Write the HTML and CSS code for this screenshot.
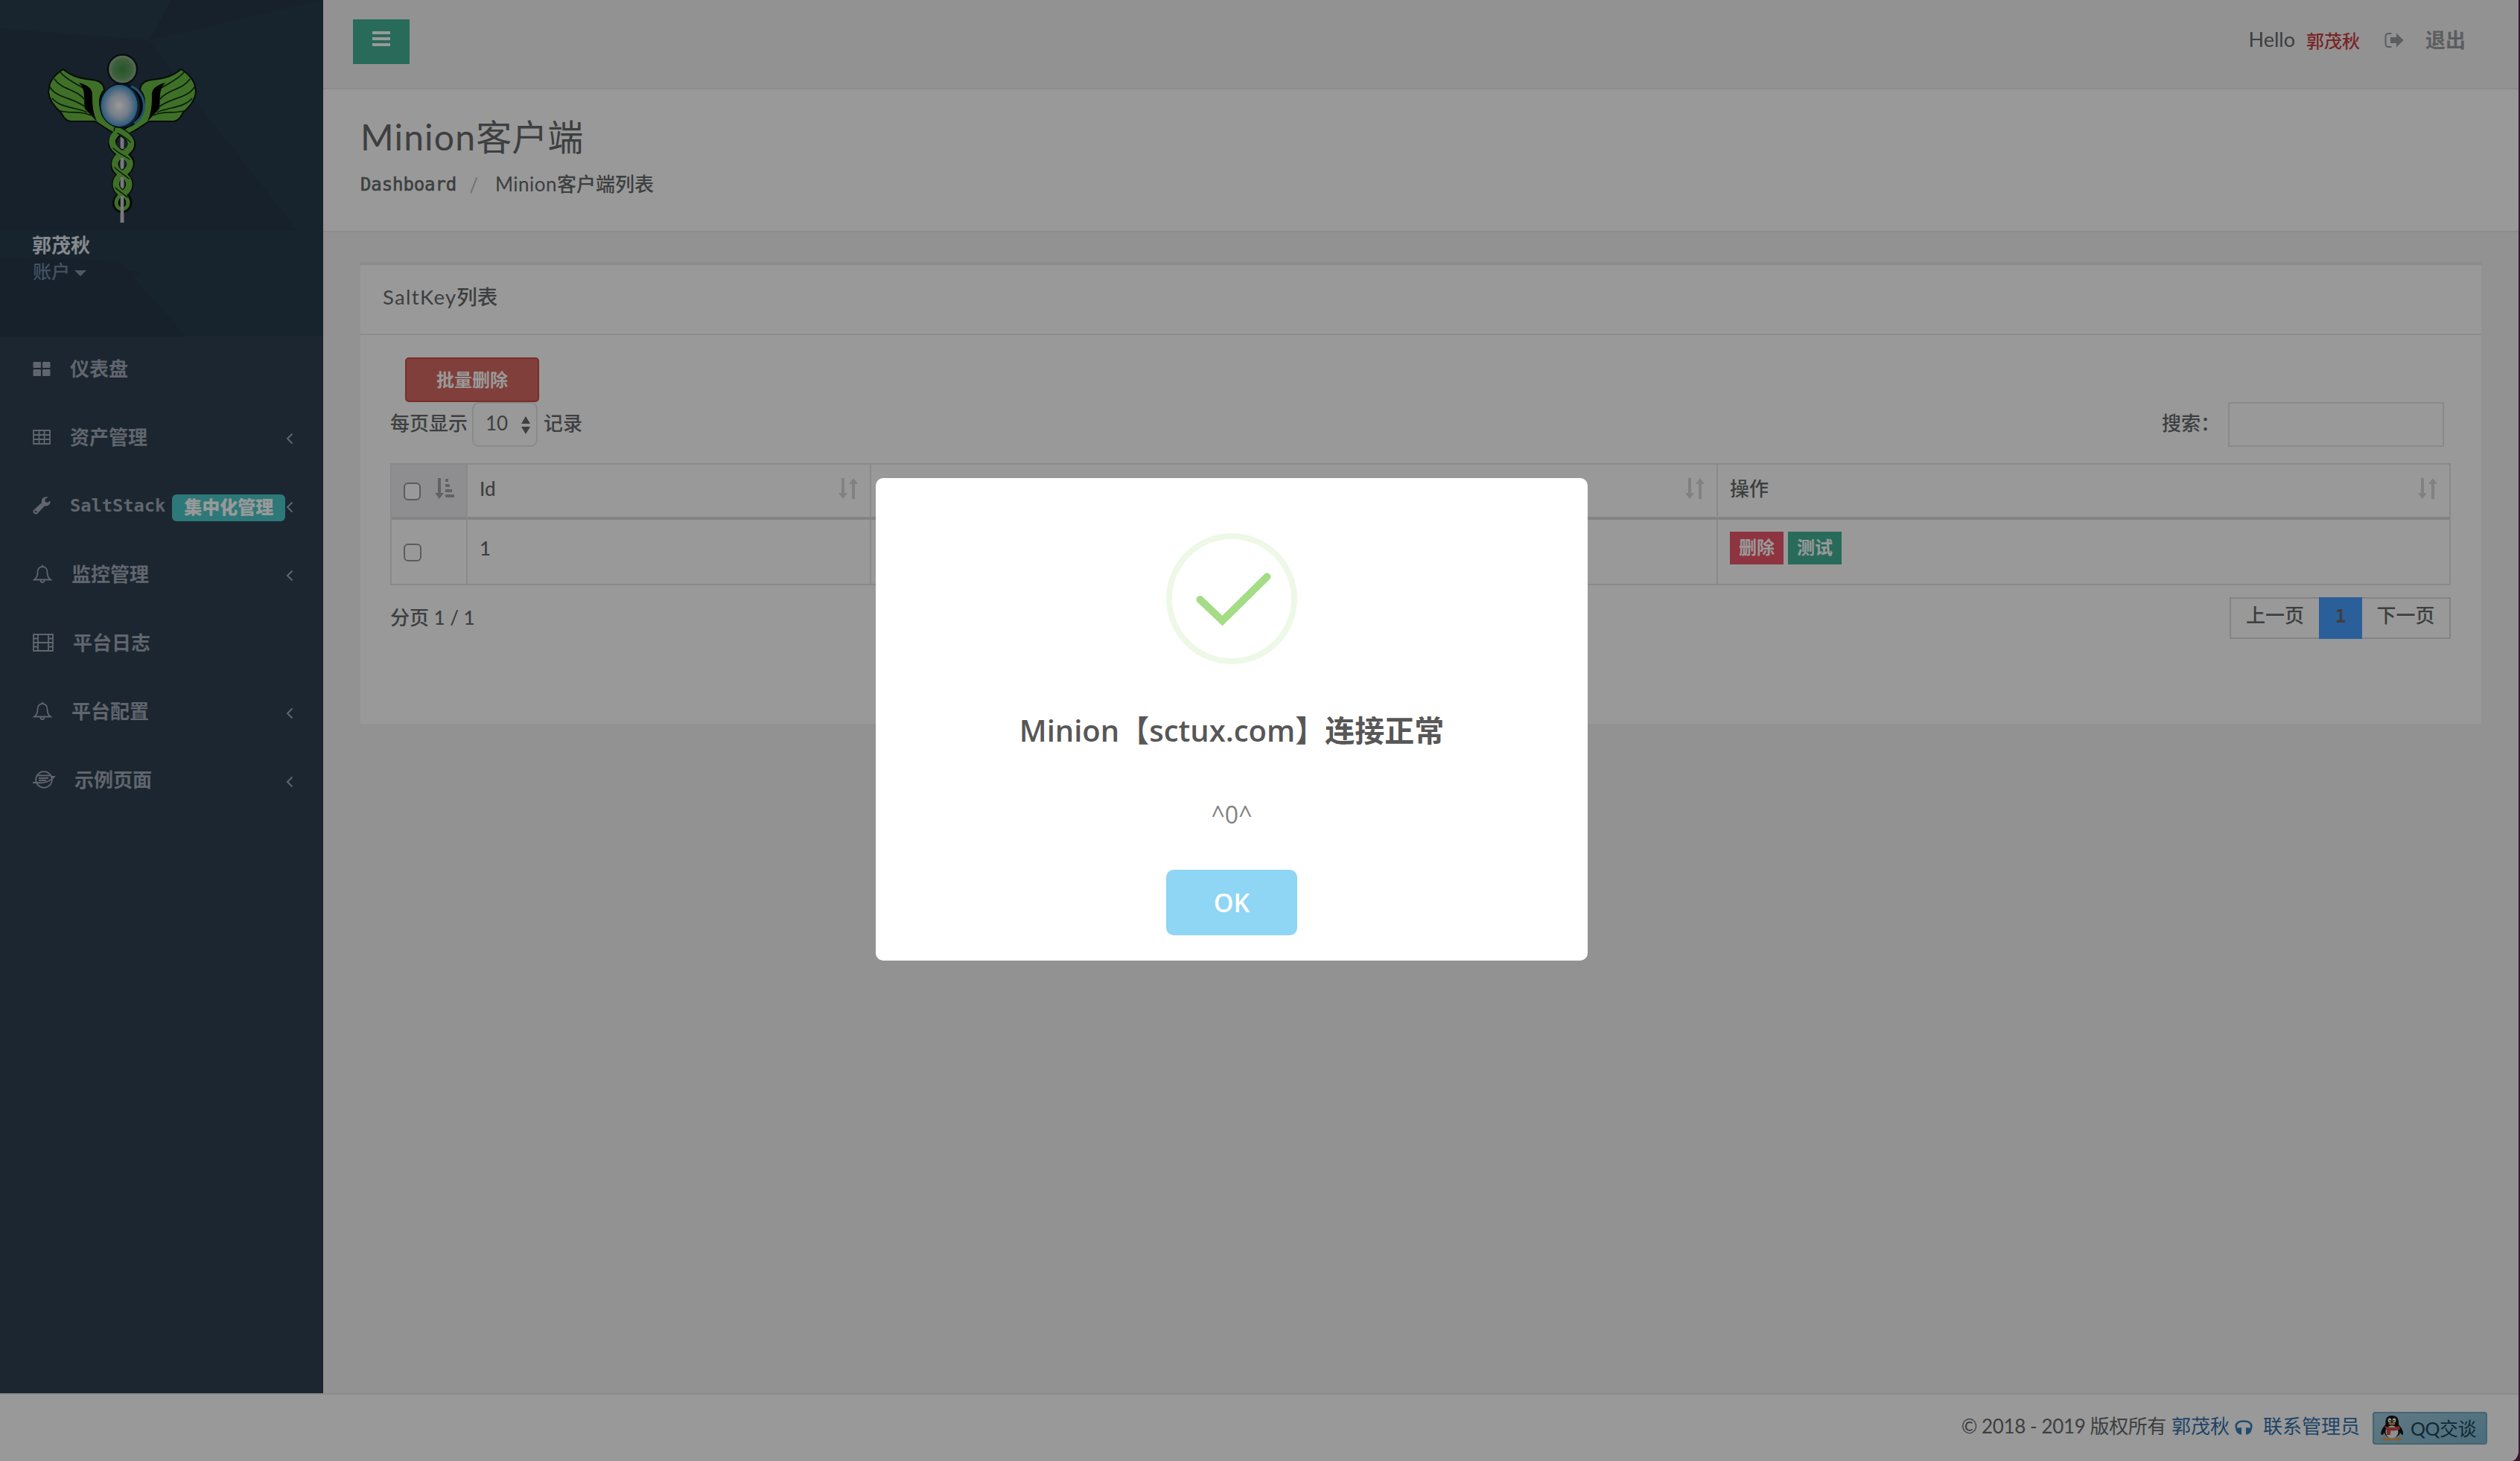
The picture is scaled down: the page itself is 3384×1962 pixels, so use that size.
FILE: index.html
```html
<!DOCTYPE html>
<html lang="zh-CN">
<head>
<meta charset="utf-8">
<title>Minion客户端</title>
<link rel="stylesheet" href="styles.css">
</head>
<body>
<svg class="defs" width="0" height="0" aria-hidden="true">
  <defs>
    <symbol id="bell" viewBox="0 0 26 26"><path d="M13 3c-4.500 0-6.500 3.500-6.500 7.500 0 5-1.500 8-4.500 10h22c-3-2-4.500-5-4.500-10C19.500 6.500 17.500 3 13 3zM13 3V.8M10.500 21.500a2.500 2.500 0 0 0 5 0" fill="none" stroke="currentColor" stroke-width="1.800"/></symbol>
    <symbol id="chev" viewBox="0 0 10 16"><path d="M8.500 1.500 2 8l6.500 6.500" fill="none" stroke="currentColor" stroke-width="2"/></symbol>
    <symbol id="sort" viewBox="0 0 26 28"><path d="M4 0h4v20h4l-6 8-6-8h4zM18 28h4V8h4l-6-8-6 8h4z" fill="currentColor"/></symbol>
  </defs>
</svg>
<div class="app">
  <div class="main">
    <aside class="side">
      <div class="profile">
        <svg class="facets" viewBox="0 0 434 452" preserveAspectRatio="none"><path d="M0 38 200 54 230 0H0z" fill="#2b4152"/><path d="M200 54 434 0v310H400L265 140z" fill="#294253" opacity=".6"/><path d="M0 310h434v142H250L160 350 0 345z" fill="#294356" opacity=".8"/><path d="M0 345 190 365 60 452H0z" fill="#263848"/></svg>
        <svg class="logo" viewBox="0 0 240 250">
          <defs>
            <radialGradient id="head"><stop offset="0" stop-color="#3f8d45"/><stop offset=".7" stop-color="#69a169"/><stop offset="1" stop-color="#a8b79c"/></radialGradient>
            <radialGradient id="orb"><stop offset="0" stop-color="#ffffff"/><stop offset=".55" stop-color="#c2d2e6"/><stop offset="1" stop-color="#4598d0"/></radialGradient>
            <g id="wing"><path d="M45 33C60 46 77 46 89 48c8 2 11 8 11 13-8 8-10 28 6 43l19 12-5 6C104 115 95 107 88 103H55C48 102 45 97 42 91c-7-6-16-16-17-28l2-11c4-8 11-15 18-19z" fill="#69bb43" stroke="#0a140c" stroke-width="2"/><path d="M66 51c14 4 19 9 18 19 0 15 2 24 6 33L74 86c-2-13 2-25-8-35z" fill="#000"/><path d="M41 37c8 10 20 14 30 21M33 46c10 15 29 13 41 28M27 57c9 15 32 14 48 27M30 72c12 14 35 12 47 19M41 89c14 4 28-1 41 6" fill="none" stroke="#123012" stroke-width="1.700"/></g>
          </defs>
          <path d="M124 122v117" stroke="#c9c9d0" stroke-width="4.500"/>
          <use href="#wing"/><use href="#wing" transform="translate(248 0) scale(-1 1)"/>
          <g fill="none" stroke-linecap="round">
            <g stroke="#08130a" stroke-width="11"><path d="M118 115c28 14 20 27 6 32-14 8-12 22 0 27 14 8 12 20 0 27-10 8-10 18 0 20"/><path d="M118 119c-12 12-8 22 6 27 16 8 14 20 0 28-12 8-10 20 0 26 12 8 10 18 0 21"/></g>
            <g stroke="#69bb43" stroke-width="8.500"><path d="M120 116c-14 10-12 22 4 31 15 9 13 19 0 27-12 8-10 20 0 26"/><path d="M118 115c26 12 20 25 6 32-14 8-12 20 0 27 13 8 12 20 0 27"/></g>
            <path d="M124 200c-12 9-9 20 0 21 9-1 12-12 0-21" stroke="#69bb43" stroke-width="5"/>
            <path d="M118 119c8 4 13 7 17 12M112 139c8 8 16 10 22 15M114 165c7 7 14 10 19 15M115 192c6 6 12 9 16 13" stroke="#12310f" stroke-width="1.500"/>
          </g>
          <path d="M124 126v10M124 152v11M124 178v13M124 203v36" stroke="#c9c9d0" stroke-width="4.500"/>
          <circle cx="124" cy="82" r="29.500" fill="#173a54" stroke="#0b1820" stroke-width="1.500"/>
          <path d="M128 54a29 29 0 0 1 6 55 31 31 0 0 0-6-55z" fill="#05090d"/>
          <path d="M136 56a28 28 0 0 1 4 50" fill="none" stroke="#3987bd" stroke-width="3"/>
          <ellipse cx="120" cy="82" rx="24.500" ry="28" fill="url(#orb)"/>
          <circle cx="124.500" cy="33" r="19.500" fill="url(#head)" stroke="#11181b" stroke-width="2.500"/>
        </svg>
        <strong class="uname">郭茂秋</strong>
        <span class="acct">账户<i class="caret"></i></span>
      </div>
      <nav class="menu">
        <a class="item"><svg class="mi" viewBox="0 0 24 24"><path d="M1.500 3h8.500q1 0 1 1v6q0 1-1 1H1.500q-1 0-1-1V4q0-1 1-1zM14 3h8.500q1 0 1 1v6q0 1-1 1H14q-1 0-1-1V4q0-1 1-1zM1.500 13H10q1 0 1 1v7q0 1-1 1H1.500q-1 0-1-1v-7q0-1 1-1zM14 13h8.500q1 0 1 1v7q0 1-1 1H14q-1 0-1-1v-7q0-1 1-1z" fill="currentColor"/></svg><span>仪表盘</span></a>
        <a class="item"><svg class="mi" viewBox="0 0 24 24"><path d="M1 3h22v18H1zM1 9h22M1 15h22M8.500 3v18M15.500 3v18" fill="none" stroke="currentColor" stroke-width="1.800"/></svg><span>资产管理</span><svg class="chev"><use href="#chev"/></svg></a>
        <a class="item"><svg class="mi" viewBox="0 0 24 24"><path d="M23.500 5.500 19.500 8 16.500 6.500V3L20.500.8C16-.8 11 2 12 8L1 18c-2 3 2 7 5 5L16 12.500c5 .5 8-2.500 7.500-7z" fill="currentColor"/><circle cx="4" cy="20" r="1.300" fill="#2f4050"/></svg><span class="mono">SaltStack</span><b class="badge">集中化管理</b><svg class="chev"><use href="#chev"/></svg></a>
        <a class="item"><svg class="mi w26"><use href="#bell"/></svg><span>监控管理</span><svg class="chev"><use href="#chev"/></svg></a>
        <a class="item"><svg class="mi w28" viewBox="0 0 28 26"><path d="M1 2h26v22H1zM7 2v22M21 2v22M7 13h14M1 7.500h6M1 13h6M1 18.500h6M21 7.500h6M21 13h6M21 18.500h6" fill="none" stroke="currentColor" stroke-width="1.800"/></svg><span>平台日志</span></a>
        <a class="item"><svg class="mi w26"><use href="#bell"/></svg><span>平台配置</span><svg class="chev"><use href="#chev"/></svg></a>
        <a class="item"><svg class="mi w30" viewBox="0 0 30 26"><g fill="none" stroke="currentColor" stroke-width="1.800"><circle cx="15" cy="13" r="10.800"/><path d="M0 17h7c7 1 16-1 22-8h-5M6 7.500h17M8 11h13M8 14h10"/></g></svg><span>示例页面</span><svg class="chev"><use href="#chev"/></svg></a>
      </nav>
    </aside>
    <div class="page">
      <header class="top">
        <button class="toggle" aria-label="menu"><i></i><i></i><i></i></button>
        <span class="hello">Hello</span><span class="who">郭茂秋</span>
        <svg class="out" viewBox="0 0 26 22"><path d="M9.500 2H5.500Q1.500 2 1.500 6v10q0 4 4 4h4" fill="none" stroke="currentColor" stroke-width="2"/><path d="M16 1.500 25.500 11 16 20.500V15H8V7h8z" fill="currentColor"/></svg>
        <b class="exit">退出</b>
      </header>
      <section class="heading">
        <h1><span class="lt">Minion</span>客户端</h1>
        <div class="crumbs"><span class="dash">Dashboard</span><span class="slash">/</span><span class="here"><span class="lt">Minion</span>客户端列表</span></div>
      </section>
      <section class="card">
        <h2><span class="lt">SaltKey</span>列表</h2>
        <div class="body">
          <button class="bulk">批量删除</button>
          <div class="tools">
            <span>每页显示</span>
            <span class="select">10<svg viewBox="0 0 12 24"><path d="M0 10 6 0l6 10zM0 14h12L6 24z" fill="currentColor"/></svg></span>
            <span>记录</span>
            <span class="search">搜索：</span><span class="input"></span>
          </div>
          <div class="table">
            <div class="cell head sorted"><i class="cb"></i><svg class="asc" viewBox="0 0 26 28"><path d="M4 0h4v20h4l-6 8-6-8h4zM14 1h4v4h-4zM14 8h6v4h-6zM14 15h9v4h-9zM14 22h12v4H14z" fill="currentColor"/></svg></div>
            <div class="cell head">Id<svg class="sort"><use href="#sort"/></svg></div>
            <div class="cell head"><svg class="sort"><use href="#sort"/></svg></div>
            <div class="cell head">操作<svg class="sort"><use href="#sort"/></svg></div>
            <div class="cell"><i class="cb"></i></div>
            <div class="cell">1</div>
            <div class="cell"></div>
            <div class="cell acts"><b class="del">删除</b><b class="test">测试</b></div>
          </div>
          <div class="foot">
            <span class="info">分页 1 / 1</span>
            <div class="pager"><span class="prev">上一页</span><span class="cur">1</span><span class="next">下一页</span></div>
          </div>
        </div>
      </section>
    </div>
  </div>
  <footer class="footer">
    <span class="copy">© 2018 - 2019 版权所有</span><a class="owner">郭茂秋</a>
    <svg class="phones" viewBox="0 0 24 20"><path d="M3 13C-1 5 5 1.500 12 1.500S25 5 21 13" fill="none" stroke="currentColor" stroke-width="2.600"/><path d="M4 10.500 9 10v9.500H7Q1 17 1.500 12zM20 10.500 15 10v9.500h2q6-2.500 5.500-7.500z" fill="currentColor"/></svg>
    <a class="contact">联系管理员</a>
    <a class="qq"><svg viewBox="0 0 32 34"><ellipse cx="9" cy="31.500" rx="7" ry="2.300" fill="#d9a25b"/><ellipse cx="23" cy="31.500" rx="7" ry="2.300" fill="#d9a25b"/><path d="M16 0C8 0 7 6 7.500 12 3 17 0 22 2 26c2 0 3-2 4-3 1 9 19 9 21 0 1 1 2 3 4 3 1-5-2-9-6-14C25.500 5 24 0 16 0z" fill="#151515"/><ellipse cx="16" cy="22" rx="8.500" ry="8.500" fill="#eee"/><ellipse cx="13" cy="6.500" rx="2.300" ry="3" fill="#fff"/><ellipse cx="19" cy="6.500" rx="2.300" ry="3" fill="#fff"/><circle cx="13.500" cy="7" r="1"/><circle cx="18.500" cy="7" r="1"/><ellipse cx="16" cy="11" rx="4.500" ry="1.600" fill="#e0a040"/><path d="M6 14q10 4 20 0l1 4q-6 3-13 2.500V26H9v-6.500z" fill="#d04a48"/></svg><span>QQ交谈</span></a>
  </footer>
</div>
<div class="overlay"></div>
<div class="edge"></div>
<div class="corner"></div>
<div class="modal">
  <svg class="ok-icon" viewBox="0 0 176 176"><circle cx="88" cy="88" r="84" fill="none" stroke="#edf8e7" stroke-width="8"/><path d="M45.500 89 75.500 117.500 135.500 58.500" fill="none" stroke="#a5dc86" stroke-width="10" stroke-linecap="round"/></svg>
  <div class="m-title">Minion【sctux.com】连接正常</div>
  <div class="m-text">^0^</div>
  <button class="m-ok">OK</button>
</div>
</body>
</html>
```
FILE: styles.css
```css
* { box-sizing: border-box; }
html, body { margin: 0; height: 100%; overflow: hidden; }
body {
  font: 26px/36px Lato, "Noto Sans CJK SC", sans-serif;
  color: #676a6c;
  background: #f3f3f4;
}
button { border: 0; padding: 0; font: inherit; }
i { font-style: normal; }
svg { display: block; flex: none; }
.defs { position: absolute; }
.app { display: flex; flex-direction: column; height: 1962px; width: 3384px; }
.main { display: flex; flex: 1; }

.side { flex: none; width: 434px; background: #2f4050; color: #a0a8b8; }
.profile { position: relative; height: 452px; padding: 60px 0 0 40px; background: #273848; display: flex; flex-direction: column; align-items: flex-start; }
.facets { position: absolute; inset: 0; width: 100%; height: 100%; opacity: .5; }
.logo { position: relative; width: 240px; height: 250px; }
.uname { position: relative; margin: 1px 0 0 3px; color: #dfe4ed; line-height: 36px; }
.acct { position: relative; margin-left: 4px; font-size: 25px; line-height: 34px; font-weight: 500; color: #7186a4; display: flex; align-items: center; }
.caret { border: 8px solid transparent; border-top-color: #8095a8; border-bottom: 0; margin: 5px 0 0 6px; }
.menu { display: flex; flex-direction: column; }
.item { display: flex; align-items: center; height: 92.100px; padding: 0 40px 7px 44px; font-weight: 700; }
.item span { margin-left: 26px; }
.mi { width: 24px; height: 24px; }
.w26 { width: 26px; height: 26px; }
.w28 { width: 28px; height: 26px; }
.w30 { width: 30px; height: 26px; }
.item .mono { font: 700 23.700px/36px "DejaVu Sans Mono", monospace; margin-top: 1px; }
.badge { margin: 7px -10px 0 9px; width: 152px; height: 36px; border-radius: 6px; background: #4bc8c8; color: #fff; font-size: 24px; line-height: 34px; text-align: center; }
.chev { width: 10px; height: 16px; margin: 5px 0 0 auto; }

.page { flex: 1; min-width: 0; display: flex; flex-direction: column; }
.top { height: 120px; border-bottom: 2px solid #e7eaec; display: flex; align-items: flex-start; padding: 26px 73px 0 40px; }
.toggle { width: 76px; height: 60px; background: #44b296; display: flex; flex-direction: column; align-items: center; gap: 4px; padding-top: 16px; }
.toggle i { width: 24px; height: 4px; background: #fff; }
.hello { margin: 9px 15px 0 auto; font-size: 27px; }
.who { margin-top: 11px; font-size: 24px; color: #ca3c40; font-weight: 500; }
.out { width: 26px; height: 22px; margin: 17px 29px 0 33px; color: #999c9e; }
.exit { margin-top: 10px; font-size: 27px; color: #999c9e; }

.heading { height: 192px; background: #fff; border-bottom: 2px solid #e7eaec; padding: 34px 50px 0; }
h1 { margin: 0; font-size: 48px; line-height: 60px; font-weight: 400; }
.lt { font-weight: 400; letter-spacing: .5px; }
h1 .lt { letter-spacing: 1.200px; }
h2 .lt { letter-spacing: 1.300px; }
.crumbs { display: flex; align-items: center; margin-top: 15px; line-height: 36px; }
.dash { font: 24px/36px "DejaVu Sans Mono", monospace; -webkit-text-stroke: .6px; letter-spacing: -.1px; margin-top: 1px; }
.slash { margin: 0 23px 0 17px; color: #bbb; }
.here { font-weight: 500; margin-top: -1px; }

.card { margin: 40px 52px 0 50px; height: 620px; background: #fff; border-top: 4px solid #e7eaec; }
h2 { margin: 0; height: 94px; padding: 23px 30px 0; border-bottom: 2px solid #e7eaec; font-size: 27.500px; line-height: 40px; font-weight: 500; }
.body { padding: 30px 41px 0 40px; }
.bulk { display: block; margin-left: 20px; width: 180px; height: 60px; background: #d56962; border: 2px solid #c94c46; border-radius: 5px; color: #fff; font-size: 24px; font-weight: 700; line-height: 54px; }
.tools { display: flex; height: 60px; line-height: 56px; font-weight: 500; }
.select { display: flex; justify-content: space-between; align-items: center; width: 88px; height: 60px; margin: 0 8px 0 6px; padding: 0 8px 4px 16px; border: 2px solid #e5e6e7; border-radius: 9px; font-weight: 400; }
.select svg { width: 12px; height: 24px; margin-top: 6px; }
.search { margin-left: auto; }
.input { width: 290px; height: 60px; border: 2px solid #e5e6e7; margin: 0 9px 0 11px; }
.table { display: grid; grid-template-columns: 102px 542px 1137px 1fr; grid-template-rows: 74px 88px; margin-top: 22px; border: 2px solid #e7e7e7; border-right: 0; border-bottom: 0; }
.cell { display: flex; align-items: flex-start; padding: 14px 16px 0; border-right: 2px solid #e7e7e7; border-bottom: 2px solid #e7e7e7; font-weight: 500; }
.head { border-bottom: 4px solid #dddddd; }
.sorted { background: #ededf2; }
.cb { width: 24px; height: 24px; margin-top: 10px; border: 2px solid #999; border-radius: 6px; background: #fff; }
.cell:not(.head) { padding-top: 20px; }
.cell:not(.head) .cb { margin-top: 12px; }
.asc { width: 26px; height: 28px; margin: 4px 0 0 19px; color: #a4a4aa; }
.sort { width: 26px; height: 28px; margin: 4px 0 0 auto; color: #d8d8d8; }
.acts { gap: 6px; }
.acts b { width: 72px; height: 44px; margin-top: -4px; color: #fff; font-size: 24px; line-height: 42px; text-align: center; }
.del { background: #eb586b; }
.test { background: #44b296; }
.foot { display: flex; justify-content: space-between; margin-top: 16px; }
.info { margin-top: 9px; font-weight: 500; }
.pager { display: flex; height: 56px; line-height: 44px; font-weight: 500; }
.pager span { border: 2px solid #ddd; text-align: center; }
.pager .prev { width: 120px; border-right: 0; }
.pager .cur { width: 58px; background: #499eff; border-color: #499eff; font: 700 24px/48px "DejaVu Sans Mono", monospace; }
.pager .next { width: 119px; border-left: 0; }

.footer { height: 91px; background: #fff; border-top: 2px solid #e7eaec; display: flex; align-items: flex-start; justify-content: flex-end; padding: 23px 44px 0 0; }
.copy { margin: 1px 7px 0 0; font-weight: 400; letter-spacing: -.400px; }
.owner, .contact { margin-top: 1px; color: #3570ac; }
.phones { width: 24px; height: 20px; margin: 11px 14px 0 7px; color: #3580b8; }
.qq { display: flex; align-items: center; width: 154px; height: 44px; margin-left: 17px; padding-left: 8px; border: 2px solid #74a9bc; border-radius: 4px; background: linear-gradient(160deg, #9fcbdc, #7eb5cf); color: #1c4356; }
.qq svg { width: 32px; height: 34px; margin-right: 9px; }
.qq span { font-size: 25px; letter-spacing: -.5px; white-space: nowrap; }

.overlay { position: fixed; inset: 0; background: rgba(0, 0, 0, .4); }
.edge { position: fixed; top: 0; right: 0; bottom: 0; width: 2px; background: #3a1830; }
.corner { position: fixed; right: 2px; bottom: 0; width: 10px; height: 14px; background: radial-gradient(ellipse at 0 0, transparent 70%, #3a1830 72%); }
.modal { position: fixed; left: 1176px; top: 642px; width: 956px; height: 648px; padding-top: 74px; border-radius: 10px; background: #fff; display: flex; flex-direction: column; align-items: center; }
.ok-icon { width: 176px; height: 176px; }
.m-title { margin-top: 59px; font: 600 40px/60px "Open Sans", "Noto Sans CJK SC", sans-serif; color: #575757; white-space: nowrap; }
.m-text { margin-top: 61px; font: 400 32px/44px "Open Sans", sans-serif; color: #828282; }
.m-ok { width: 176px; height: 88px; margin-top: 52px; border-radius: 10px; background: #8fd5f4; color: #fff; font: 600 34px/86px "Open Sans", sans-serif; }
```
